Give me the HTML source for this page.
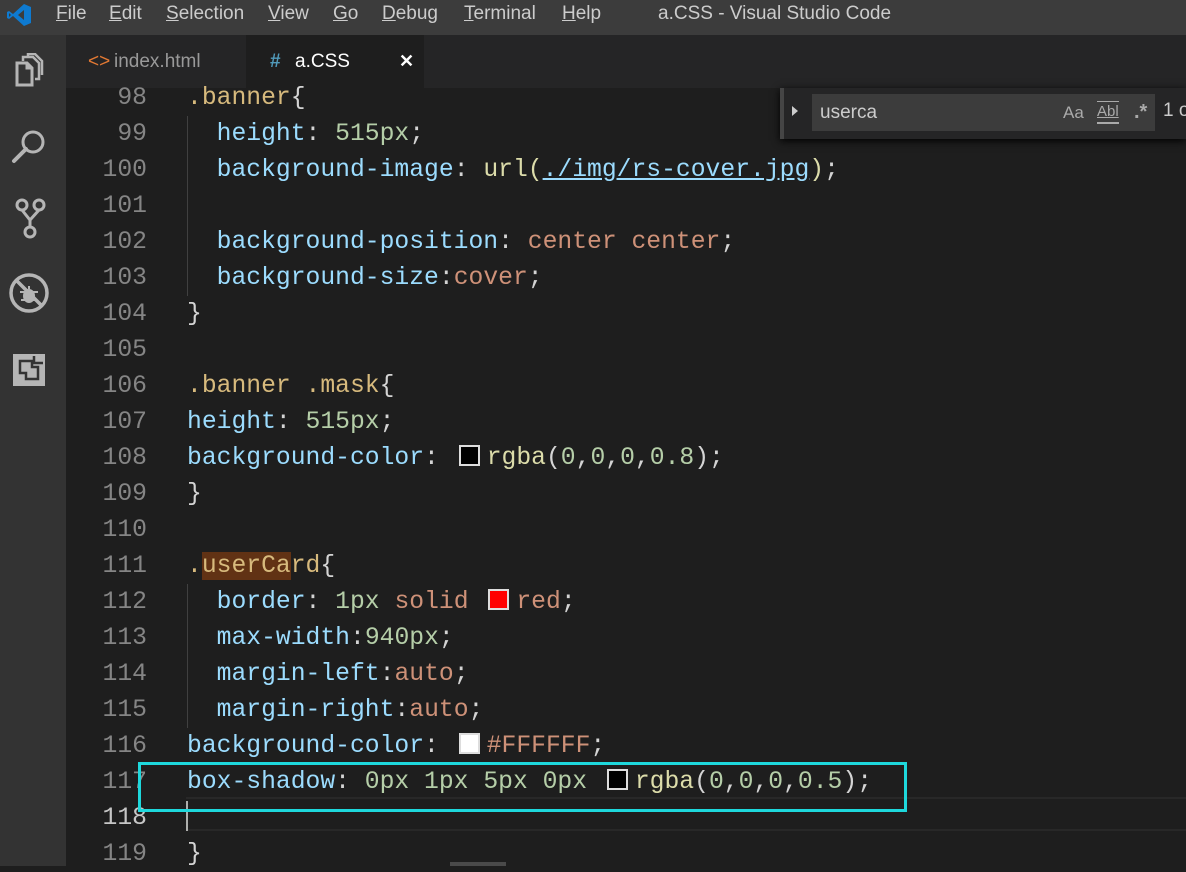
<!DOCTYPE html>
<html><head><meta charset="utf-8"><style>
*{margin:0;padding:0;box-sizing:border-box}
body{width:1186px;height:866px;background:#1e1e1e;overflow:hidden;position:relative;font-family:"Liberation Sans",sans-serif}
#title{position:absolute;left:0;top:0;width:1186px;height:35px;background:#3c3c3c;color:#ccc;font-size:19px}
#title span{position:absolute;top:3px}
#title u{text-decoration:underline}
#act{position:absolute;left:0;top:35px;width:66px;height:831px;background:#333}
#tabs{position:absolute;left:66px;top:35px;width:1120px;height:53px;background:#252526}
.tab{position:absolute;top:0;height:53px;font-size:19px;line-height:53px}
#code{position:absolute;left:0;top:80px;font-family:"Liberation Mono",monospace;font-size:24.7px}
.ln{position:absolute;left:66px;width:81px;text-align:right;color:#858585;height:36px;line-height:36px}
.l{position:absolute;left:187px;height:36px;line-height:36px;white-space:pre;color:#d4d4d4}
.p{color:#9cdcfe}.n{color:#b5cea8}.s{color:#ce9178}.sel{color:#d7ba7d}.f{color:#dcdcaa}
.sw{display:inline-block;width:21px;height:21px;border:2px solid #ddd;margin:0 7px 0 5px;vertical-align:-2px}
.g{position:absolute;left:187px;width:1px;background:#404040}
</style></head><body>
<div id="title">
<svg style="position:absolute;left:6px;top:3px" width="26" height="24" viewBox="0 0 26 24"><path d="M18 1 L25 4 V20 L18 23 L7 13 L3 16 L1 15 V9 L3 8 L7 11 Z M18 7 L12 12 L18 17 Z" fill="#0e7ad0"/><path d="M3 10 V14 L5 12 Z" fill="#3c3c3c"/></svg>
<span style="left:56px"><u>F</u>ile</span><span style="left:109px"><u>E</u>dit</span><span style="left:166px"><u>S</u>election</span><span style="left:268px"><u>V</u>iew</span><span style="left:333px"><u>G</u>o</span><span style="left:382px"><u>D</u>ebug</span><span style="left:464px"><u>T</u>erminal</span><span style="left:562px"><u>H</u>elp</span><span style="left:658px">a.CSS - Visual Studio Code</span>
</div>
<div id="act">
<svg style="position:absolute;left:14px;top:18px" width="32" height="36" viewBox="0 0 32 36"><path d="M3 10 H13 L18 15 V32 H3 Z M13 10 V15 H18" fill="none" stroke="#b5b5b5" stroke-width="3"/><path d="M9 8 V4 H19 L25 10 V26 H21 M14 4 V1 H21 L28 8 V22" fill="none" stroke="#b5b5b5" stroke-width="2.5"/></svg>
<svg style="position:absolute;left:10px;top:92px" width="40" height="40"><circle cx="23" cy="15" r="10" fill="none" stroke="#b5b5b5" stroke-width="3"/><path d="M16 22 L4 34" stroke="#b5b5b5" stroke-width="4" stroke-linecap="round"/></svg>
<svg style="position:absolute;left:12px;top:160px" width="36" height="46"><circle cx="10" cy="10" r="5" fill="none" stroke="#b5b5b5" stroke-width="3"/><circle cx="27" cy="10" r="5" fill="none" stroke="#b5b5b5" stroke-width="3"/><circle cx="18" cy="37" r="5" fill="none" stroke="#b5b5b5" stroke-width="3"/><path d="M10 15 L18 25 L27 15 M18 25 V32" fill="none" stroke="#b5b5b5" stroke-width="3"/></svg>
<svg style="position:absolute;left:8px;top:237px" width="44" height="44"><circle cx="21" cy="21" r="18" fill="none" stroke="#b5b5b5" stroke-width="3.5"/><path d="M9 9 L33 33" stroke="#b5b5b5" stroke-width="3.5"/><ellipse cx="21" cy="24" rx="6" ry="7" fill="#b5b5b5"/><path d="M12 20 H30 M13 28 H29 M21 14 V17" stroke="#b5b5b5" stroke-width="2"/></svg>
<svg style="position:absolute;left:12px;top:318px" width="34" height="34"><rect x="1" y="1" width="32" height="32" fill="#b5b5b5"/><path d="M8 8 H20 V14 H26 V26 H14 V20 H8 Z" fill="none" stroke="#333" stroke-width="2.5"/><path d="M22 3 V10 H31" fill="none" stroke="#333" stroke-width="2.5"/></svg>
</div>
<div id="tabs">
<div class="tab" style="left:0;width:180px;color:#999"><span style="position:absolute;left:22px;color:#e37933">&lt;&gt;</span><span style="position:absolute;left:48px">index.html</span></div>
<div class="tab" style="left:180px;width:178px;background:#1e1e1e;color:#fff"><span style="position:absolute;left:24px;color:#519aba;font-weight:bold">#</span><span style="position:absolute;left:49px">a.CSS</span><span style="position:absolute;left:153px;font-size:18px;font-weight:bold">✕</span></div>
</div>
<div class="g" style="top:116px;height:180px"></div>
<div class="g" style="top:584px;height:144px"></div>
<div style="position:absolute;left:186px;top:797px;width:1000px;height:34px;border-top:2px solid #282828;border-bottom:2px solid #282828"></div>
<div style="position:absolute;left:186px;top:801px;width:2px;height:30px;background:#aeafad"></div>
<div id="code">
<div class="ln" style="top:0">98</div><div class="l" style="top:0"><span class="sel">.banner</span>{</div>
<div class="ln" style="top:36px">99</div><div class="l" style="top:36px">  <span class="p">height</span>: <span class="n">515px</span>;</div>
<div class="ln" style="top:72px">100</div><div class="l" style="top:72px">  <span class="p">background-image</span>: <span class="f">url(</span><span class="s" style="text-decoration:underline;color:#9cdcfe">./img/rs-cover.jpg</span><span class="f">)</span>;</div>
<div class="ln" style="top:108px">101</div>
<div class="ln" style="top:144px">102</div><div class="l" style="top:144px">  <span class="p">background-position</span>: <span class="s">center center</span>;</div>
<div class="ln" style="top:180px">103</div><div class="l" style="top:180px">  <span class="p">background-size</span>:<span class="s">cover</span>;</div>
<div class="ln" style="top:216px">104</div><div class="l" style="top:216px">}</div>
<div class="ln" style="top:252px">105</div>
<div class="ln" style="top:288px">106</div><div class="l" style="top:288px"><span class="sel">.banner .mask</span>{</div>
<div class="ln" style="top:324px">107</div><div class="l" style="top:324px"><span class="p">height</span>: <span class="n">515px</span>;</div>
<div class="ln" style="top:360px">108</div><div class="l" style="top:360px"><span class="p">background-color</span>: <span class="sw" style="background:#000"></span><span class="f">rgba</span>(<span class="n">0</span>,<span class="n">0</span>,<span class="n">0</span>,<span class="n">0.8</span>);</div>
<div class="ln" style="top:396px">109</div><div class="l" style="top:396px">}</div>
<div class="ln" style="top:432px">110</div>
<div class="ln" style="top:468px">111</div><div class="l" style="top:468px"><span class="sel">.<span style="background:#613214">userCa</span>rd</span>{</div>
<div class="ln" style="top:504px">112</div><div class="l" style="top:504px">  <span class="p">border</span>: <span class="n">1px</span> <span class="s">solid</span> <span class="sw" style="background:#f00"></span><span class="s">red</span>;</div>
<div class="ln" style="top:540px">113</div><div class="l" style="top:540px">  <span class="p">max-width</span>:<span class="n">940px</span>;</div>
<div class="ln" style="top:576px">114</div><div class="l" style="top:576px">  <span class="p">margin-left</span>:<span class="s">auto</span>;</div>
<div class="ln" style="top:612px">115</div><div class="l" style="top:612px">  <span class="p">margin-right</span>:<span class="s">auto</span>;</div>
<div class="ln" style="top:648px">116</div><div class="l" style="top:648px"><span class="p">background-color</span>: <span class="sw" style="background:#fff"></span><span class="s">#FFFFFF</span>;</div>
<div class="ln" style="top:684px">117</div><div class="l" style="top:684px"><span class="p">box-shadow</span>: <span class="n">0px 1px 5px 0px</span> <span class="sw" style="background:#000"></span><span class="f">rgba</span>(<span class="n">0</span>,<span class="n">0</span>,<span class="n">0</span>,<span class="n">0.5</span>);</div>
<div class="ln" style="top:720px;color:#c6c6c6">118</div>
<div class="ln" style="top:756px">119</div><div class="l" style="top:756px">}</div>
</div>
<div style="position:absolute;left:138px;top:762px;width:769px;height:50px;border:3px solid #1ed8dc"></div>
<div style="position:absolute;left:450px;top:862px;width:56px;height:4px;background:#4a4a4a"></div>
<div style="position:absolute;left:780px;top:88px;width:406px;height:51px;background:#252526;box-shadow:0 2px 8px #000;border-left:4px solid #454545">
<div style="position:absolute;left:8px;top:18px;width:0;height:0;border-left:6px solid #ccc;border-top:5px solid transparent;border-bottom:5px solid transparent"></div>
<div style="position:absolute;left:28px;top:6px;width:343px;height:37px;background:#3c3c3c;color:#ccc;font-size:19px;line-height:37px;padding-left:8px">userca
<span style="position:absolute;left:251px;color:#aaa;font-size:17px">Aa</span>
<span style="position:absolute;left:285px;top:7px;line-height:20px;color:#aaa;font-size:15px;border-top:1px solid #aaa;border-bottom:2px solid #aaa;text-decoration:underline">Abl</span>
<span style="position:absolute;left:322px;color:#aaa;font-size:20px;font-weight:bold">.*</span></div>
<span style="position:absolute;left:379px;top:12px;color:#ccc;font-size:19px;white-space:nowrap">1 o</span>
</div>
</body></html>
